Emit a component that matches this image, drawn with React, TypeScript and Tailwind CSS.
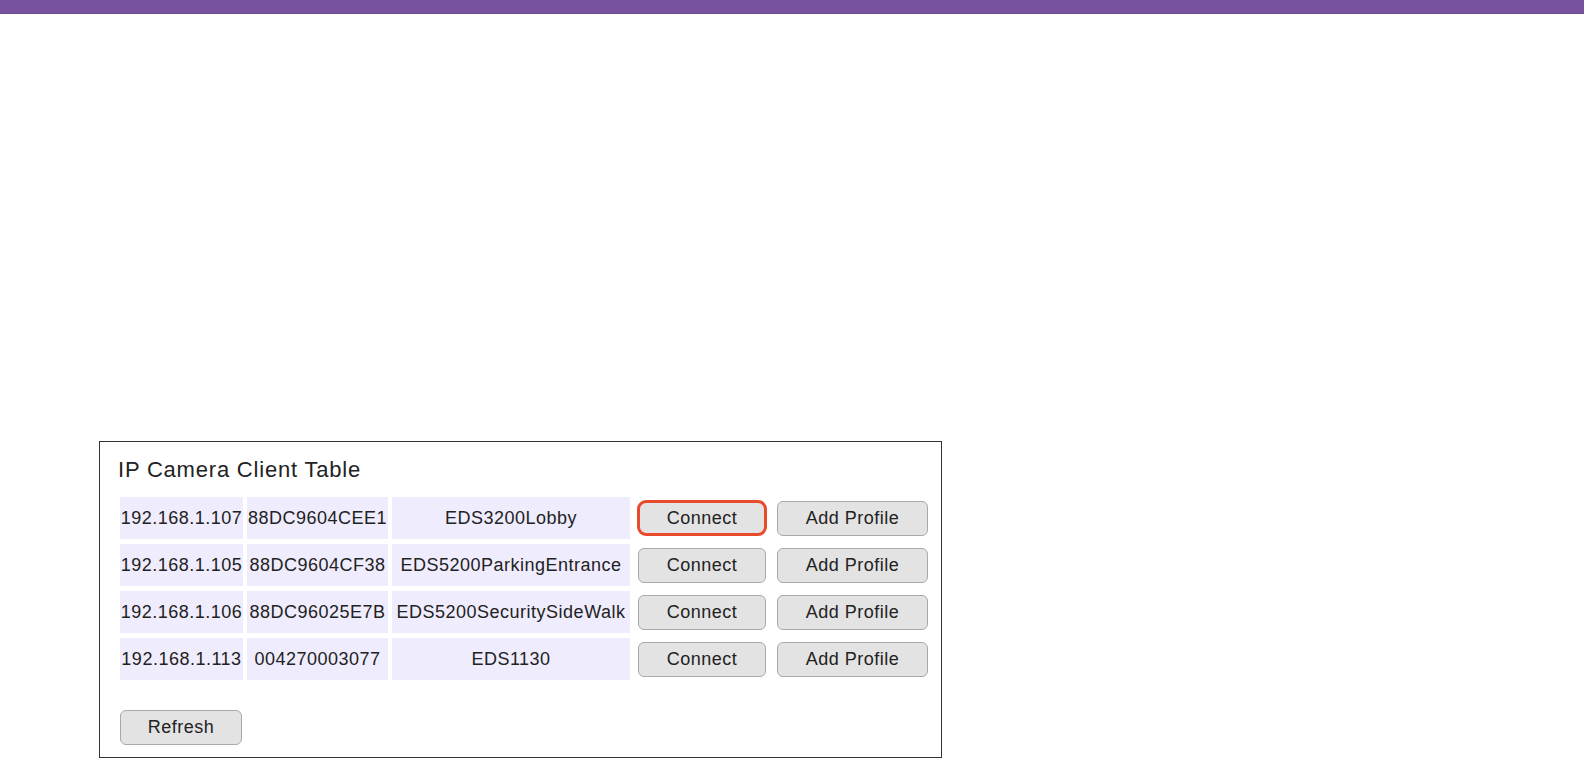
const CLIENTS = [
  { ip: "192.168.1.107", mac: "88DC9604CEE1", name: "EDS3200Lobby", active: true },
  { ip: "192.168.1.105", mac: "88DC9604CF38", name: "EDS5200ParkingEntrance", active: false },
  { ip: "192.168.1.106", mac: "88DC96025E7B", name: "EDS5200SecuritySideWalk", active: false },
  { ip: "192.168.1.113", mac: "004270003077", name: "EDS1130", active: false },
];

const FONT = "font-['Liberation_Sans',Arial,sans-serif]";

function Cell({ children }: { children: React.ReactNode }) {
  return (
    <div className="flex h-[42px] items-center justify-center whitespace-nowrap bg-[#efecfd] text-[18px] tracking-[0.5px] text-[#222]">
      {children}
    </div>
  );
}

function Button({ label, width, highlight }: { label: string; width: string; highlight?: boolean }) {
  return (
    <button
      type="button"
      className={`${width} ${
        highlight
          ? "h-[36px] rounded-[9px] border-[3px] border-[#e84a2c]"
          : "h-[35px] rounded-[6px] border border-[#a9a9a9]"
      } flex items-center justify-center bg-[#e3e3e3] text-[18px] tracking-[0.5px] text-[#222]`}
    >
      {label}
    </button>
  );
}

export default function App() {
  return (
    <div className={`h-[760px] w-[1584px] overflow-hidden bg-white ${FONT}`}>
      <div className="h-[14px] border-b border-[#6a4790] bg-[#77529d]" />

      <div className="ml-[99px] mt-[427px] w-[843px] border border-[#333] pb-[12px] pl-[20px] pt-[15px]">
        <h2 className="-ml-[2px] text-[22px] leading-[26px] tracking-[0.8px] text-[#222]">IP Camera Client Table</h2>

        <div className="mt-[14px] grid grid-cols-[123px_141px_238px_136px_157px] gap-x-[4px] gap-y-[5px]">
          {CLIENTS.map((c) => (
            <div key={c.ip} className="contents">
              <Cell>{c.ip}</Cell>
              <Cell>{c.mac}</Cell>
              <Cell>{c.name}</Cell>
              <div className="flex h-[42px] items-center justify-center">
                <Button label="Connect" width={c.active ? "w-[130px]" : "w-[128px]"} highlight={c.active} />
              </div>
              <div className="flex h-[42px] items-center justify-center">
                <Button label="Add Profile" width="w-[151px]" />
              </div>
            </div>
          ))}
        </div>

        <div className="mt-[30px]">
          <Button label="Refresh" width="w-[122px]" />
        </div>
      </div>
    </div>
  );
}
